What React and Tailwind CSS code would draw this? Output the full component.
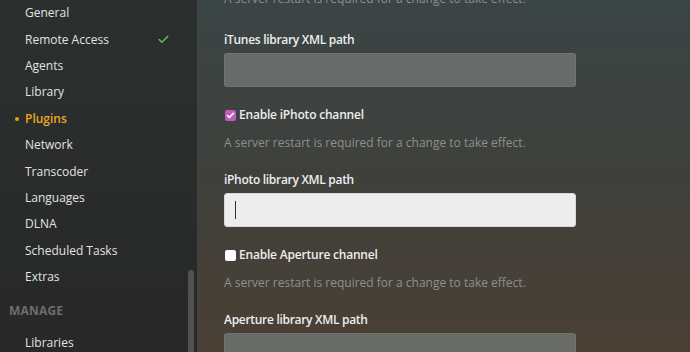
import { Check } from 'lucide-react';

const navItems = [
    'General',
    'Remote Access',
    'Agents',
    'Library',
    'Plugins',
    'Network',
    'Transcoder',
    'Languages',
    'DLNA',
    'Scheduled Tasks',
    'Extras',
];

function NavItem({ label }) {
    const active = label === 'Plugins';
    return (
        <div className="relative flex h-[26.4px] items-center pl-[25px] pr-[27px]">
            {active && (
                <span className="absolute left-[15px] top-1/2 h-[4px] w-[4px] -translate-y-1/2 rounded-full bg-[#e5a00d]" />
            )}
            <span className={active ? 'text-[#eea526] font-semibold' : 'text-[#e2e3e2] font-medium'}>{label}</span>
            {label === 'Remote Access' && (
                <Check className="ml-auto h-[13px] w-[13px] text-[#5fc35c]" strokeWidth={2.5} />
            )}
        </div>
    );
}

function Checkbox({ checked }) {
    return checked ? (
        <span className="flex h-[11px] w-[11px] items-center justify-center rounded-[2px] bg-[#c25cbb]">
            <Check className="h-[9px] w-[9px] text-white" strokeWidth={4} />
        </span>
    ) : (
        <span className="block h-[11px] w-[11px] rounded-[2px] bg-white" />
    );
}

function Helper({ className = '' }) {
    return (
        <p className={`leading-[18px] text-[#8d908d] ${className}`}>
            A server restart is required for a change to take effect.
        </p>
    );
}

function PathInput({ label, focused }) {
    return (
        <div>
            <p className="leading-[18px] font-semibold tracking-[-0.3px] text-[#eeeeee]">{label}</p>
            <div
                className={
                    focused
                        ? 'mt-[4px] flex h-[34px] w-[352px] items-center rounded-[3px] border border-[#d6d6d6] bg-[#ededed] pl-[10px]'
                        : 'mt-[4px] h-[34px] w-[352px] rounded-[3px] border border-[#7a7c7a]/60 bg-[#6d706e]/90'
                }
            >
                {focused && <span className="h-[18px] w-px bg-[#333]" />}
            </div>
        </div>
    );
}

function ChannelToggle({ label, checked }) {
    return (
        <div className="mt-[19px]">
            <label className="flex h-[18px] items-center gap-[3px] font-semibold tracking-[-0.2px] text-[#eeeeee]">
                <span className="ml-[1px]">
                    <Checkbox checked={checked} />
                </span>
                {label}
            </label>
            <Helper className="mt-[10px]" />
        </div>
    );
}

export default function App() {
    return (
        <div
            className="flex h-[352px] w-[690px] overflow-hidden bg-gradient-to-b from-[#3b4545] via-[#3f403c] to-[#4a4035] text-[12px]"
            style={{ fontFamily: '"Open Sans", "Noto Sans", sans-serif' }}
        >
            <aside className="relative w-[197px] shrink-0 bg-gradient-to-b from-[#2b302f] to-[#272827]">
                <div>
                    {navItems.map((item) => (
                        <NavItem key={item} label={item} />
                    ))}
                </div>
                <p className="mt-[12px] pl-[9px] text-[12px] font-bold leading-[18px] tracking-[0.2px] text-[#6c6f6d]">
                    MANAGE
                </p>
                <div className="mt-[10px]">
                    <NavItem label="Libraries" />
                </div>
                <div className="absolute right-[3px] top-[270px] h-[100px] w-[6px] rounded-full bg-[#4f5250]" />
            </aside>

            <main className="flex-1 pl-[27px]">
                <Helper className="-mt-[10px]" />
                <div className="mt-[23px]">
                    <PathInput label="iTunes library XML path" />
                </div>
                <ChannelToggle label="Enable iPhoto channel" checked />
                <div className="mt-[19px]">
                    <PathInput label="iPhoto library XML path" focused />
                </div>
                <ChannelToggle label="Enable Aperture channel" />
                <div className="mt-[19px]">
                    <PathInput label="Aperture library XML path" />
                </div>
            </main>
        </div>
    );
}
